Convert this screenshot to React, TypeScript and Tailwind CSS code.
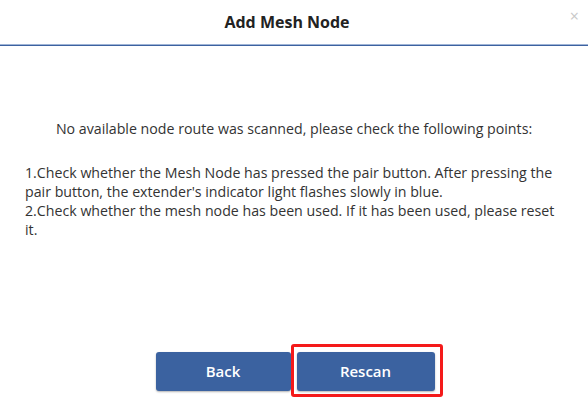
import React from "react";

export default function App() {
  return (
    <div
      className="w-[588px] h-[407px] bg-white flex flex-col text-[#333]"
      style={{ fontFamily: '"Open Sans", "Noto Sans", sans-serif' }}
    >
      <div className="relative h-[44px] flex items-center justify-center pr-[14px]">
        <div className="text-[16px] font-bold text-[#222]">Add Mesh Node</div>
        <div className="absolute right-[9px] top-[8px] text-[#c8c8c8] text-[16px] leading-none">×</div>
      </div>
      <div className="h-[1px] bg-[#9fb4d6]" />
      <div className="h-[1px] bg-[#3d62a0]" />
      <div className="flex-1 flex flex-col px-[25px] text-[14.2px] leading-[19px]">
        <div className="mt-[73px] text-center">
          No available node route was scanned, please check the following points:
        </div>
        <div className="mt-[25px]">
          1.Check whether the Mesh Node has pressed the pair button. After pressing the pair button, the extender's
          indicator light flashes slowly in blue.
          <br />
          2.Check whether the mesh node has been used. If it has been used, please reset it.
        </div>
        <div className="mt-auto mb-[16px] flex justify-center gap-[6px] pl-[2px]">
          <button className="w-[135px] h-[39px] rounded-[3px] bg-[#3b62a0] text-white text-[15px] font-semibold shadow-[0_1px_2px_rgba(0,0,0,0.3)]">
            Back
          </button>
          <div className="relative">
            <button className="w-[138px] h-[39px] rounded-[3px] bg-[#3b62a0] text-white text-[15px] font-semibold shadow-[0_1px_2px_rgba(0,0,0,0.3)]">
              Rescan
            </button>
            <div className="absolute left-[-6px] top-[-8px] w-[152px] h-[53px] border-[3px] border-[#f41a1a] rounded-[3px]" />
          </div>
        </div>
      </div>
    </div>
  );
}
